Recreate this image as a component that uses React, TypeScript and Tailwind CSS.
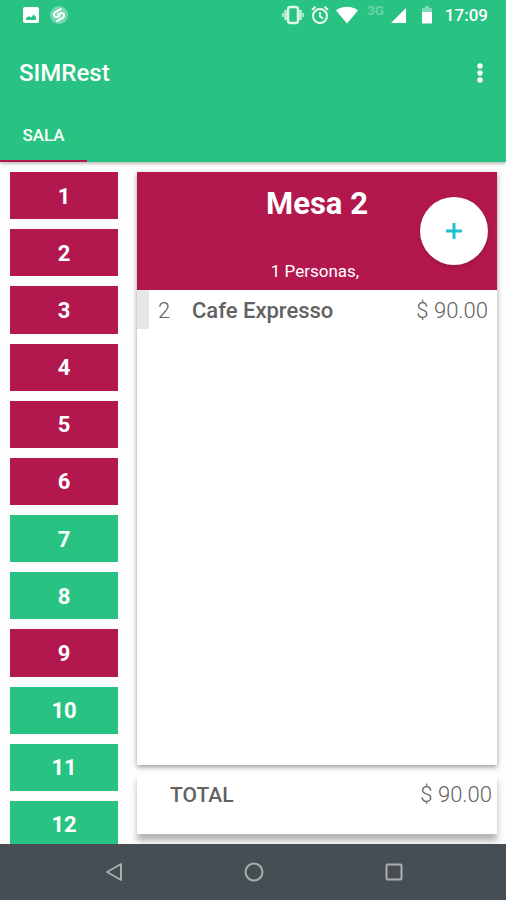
const tables = [
  { id: 1, busy: true },
  { id: 2, busy: true },
  { id: 3, busy: true },
  { id: 4, busy: true },
  { id: 5, busy: true },
  { id: 6, busy: true },
  { id: 7, busy: false },
  { id: 8, busy: false },
  { id: 9, busy: true },
  { id: 10, busy: false },
  { id: 11, busy: false },
  { id: 12, busy: false },
];

const orderItems = [{ quantity: 2, name: "Cafe Expresso", price: "$ 90.00" }];

function StatusBar() {
  return (
    <div className="flex h-[30px] items-center justify-between pr-[18px] pl-[22px]">
      <div className="flex items-center gap-[9px]">
        <svg width="18" height="18" viewBox="0 0 18 18" aria-label="Image">
          <path
            fill="#fff"
            fillRule="evenodd"
            d="M3 1h12a2 2 0 0 1 2 2v12a2 2 0 0 1-2 2H3a2 2 0 0 1-2-2V3a2 2 0 0 1 2-2zm1 13h10v-3l-2.500-2.500-2.500 3-2-1.500L4 12z"
          />
        </svg>
        <svg width="20" height="20" viewBox="0 0 20 20" fill="none" aria-label="Shazam">
          <circle cx="10" cy="10" r="9" fill="#fff" opacity="0.35" />
          <g stroke="#fff" strokeWidth="2" strokeLinecap="round">
            <path d="M12 4 6.500 7C4 8.500 4.500 11.500 7 12c1.500.2 2.500-.5 4-1.500" />
            <path d="m8 16 5.500-3c2.500-1.500 2-4.500-.5-5-1.500-.2-2.500.5-4 1.500" />
          </g>
        </svg>
      </div>

      <div className="flex items-center text-white">
        <svg width="22" height="20" viewBox="0 0 22 20" fill="none" stroke="#fff" aria-label="Vibrate">
          <rect x="6" y="2" width="10" height="16" rx="2.500" strokeWidth="2.500" opacity="0.85" />
          <path d="M3.500 5v10M18.500 5v10" strokeWidth="2.500" opacity="0.7" />
          <path d="M1 8v4M21 8v4" strokeWidth="2" opacity="0.6" />
        </svg>
        <svg
          className="ml-[7px]"
          width="18"
          height="20"
          viewBox="0 0 18 20"
          fill="none"
          stroke="#fff"
          strokeWidth="2"
          opacity="0.9"
          aria-label="Alarm"
        >
          <circle cx="9" cy="11" r="7" />
          <path d="M9 7v4.500l3 1.800M1 4.800l3.500-3M17 4.800l-3.500-3" />
        </svg>
        <svg className="ml-[7px]" width="22" height="20" viewBox="0 0 22 20" aria-label="Wi-Fi">
          <path fill="#fff" d="M0 5.500C6 .5 16 .5 22 5.500L11 18.500z" />
        </svg>
        <span className="mb-[8px] ml-[10px] text-[13px] leading-[12px] font-bold opacity-30">3G</span>
        <svg className="ml-[7px]" width="15" height="20" viewBox="0 0 15 20" aria-label="Signal">
          <path fill="#fff" d="M15 3v15H0z" />
        </svg>
        <svg className="ml-[15px]" width="12" height="20" viewBox="0 0 12 20" aria-label="Battery">
          <path fill="#fff" opacity="0.4" d="M1 3h3V1h4v2h3v4H1z" />
          <path fill="#fff" d="M1 7h10v11.500H1z" />
        </svg>
        <span className="ml-[12px] text-[17px] leading-[20px] font-medium">17:09</span>
      </div>
    </div>
  );
}

function Header() {
  return (
    <header className="relative z-10 bg-[#28c382] text-white shadow-[0_1px_4px_rgba(0,0,0,0.35)]">
      <StatusBar />
      <div className="flex h-[86px] items-center justify-between pr-[14px] pl-[19px]">
        <h1 className="text-[24px] leading-[28px] font-medium">SIMRest</h1>
        <button type="button" aria-label="Más opciones" className="flex h-8 w-6 items-center justify-center">
          <svg width="6" height="20" viewBox="0 0 6 20" fill="#fff">
            <circle cx="3" cy="3" r="2.700" />
            <circle cx="3" cy="10" r="2.700" />
            <circle cx="3" cy="17" r="2.700" />
          </svg>
        </button>
      </div>
      <nav className="flex h-[46px]">
        <button
          type="button"
          className="w-[87px] border-b-2 border-[#b2184e] pb-[6px] text-[17px] leading-[20px] font-medium"
        >
          SALA
        </button>
      </nav>
    </header>
  );
}

function TableList() {
  return (
    <nav className="w-[108px] shrink-0 overflow-y-auto [scrollbar-width:none]">
      <div className="grid h-[676px] auto-rows-fr gap-[10px]">
        {tables.map((table) => (
          <button
            key={table.id}
            type="button"
            className={`pt-[2px] text-[22px] leading-[26px] font-bold text-white ${
              table.busy ? "bg-[#b2184e]" : "bg-[#28c382]"
            }`}
          >
            {table.id}
          </button>
        ))}
      </div>
    </nav>
  );
}

function OrderCard() {
  return (
    <section className="flex flex-1 flex-col bg-white shadow-[0_2px_5px_rgba(0,0,0,0.4)]">
      <div className="relative flex h-[118px] flex-col items-center justify-between bg-[#b2184e] pt-[14px] pb-[9px] text-white">
        <h2 className="text-[31px] leading-[36px] font-bold">Mesa 2</h2>
        <p className="pr-1 text-[17px] leading-[20px]">1 Personas,</p>
        <button
          type="button"
          aria-label="Agregar"
          className="absolute top-[25px] right-[9px] flex size-[68px] items-center justify-center rounded-full bg-white shadow-[0_2px_4px_rgba(0,0,0,0.15)]"
        >
          <svg width="16" height="16" viewBox="0 0 16 16" stroke="#1fbfcf" strokeWidth="3">
            <path d="M8 0v16M0 8h16" />
          </svg>
        </button>
      </div>
      <ul>
        {orderItems.map((item) => (
          <li
            key={item.name}
            className="flex h-[39px] items-center border-l-12 border-[#e6e6e6] pt-[2px] pr-[9px] pl-[9px] text-[22px] leading-[26px] text-[#626262]"
          >
            <span className="w-[34px] font-light">{item.quantity}</span>
            <span className="flex-1 font-medium">{item.name}</span>
            <span className="font-light">{item.price}</span>
          </li>
        ))}
      </ul>
    </section>
  );
}

function TotalCard() {
  return (
    <section className="flex h-[60px] justify-between bg-white pt-[8px] pr-[5px] pl-[33px] text-[22px] leading-[26px] text-[#626262] shadow-[0_7px_6px_rgba(0,0,0,0.28)]">
      <span className="text-[21px] font-medium">TOTAL</span>
      <span className="font-light">$ 90.00</span>
    </section>
  );
}

function NavigationBar() {
  return (
    <footer className="relative z-10 flex h-[56px] items-center justify-center gap-[116px] bg-[#464e53] pl-[2px]">
      <button type="button" aria-label="Atrás">
        <svg width="24" height="24" viewBox="0 0 24 24" fill="none" stroke="#a9aeb0" strokeWidth="2">
          <path d="M19 4v16L5 12z" strokeLinejoin="round" />
        </svg>
      </button>
      <button type="button" aria-label="Inicio">
        <svg width="24" height="24" viewBox="0 0 24 24" fill="none" stroke="#a9aeb0" strokeWidth="2">
          <circle cx="12" cy="12" r="8.500" />
        </svg>
      </button>
      <button type="button" aria-label="Recientes">
        <svg width="24" height="24" viewBox="0 0 24 24" fill="none" stroke="#a9aeb0" strokeWidth="2">
          <rect x="4.500" y="4.500" width="15" height="15" rx="1" />
        </svg>
      </button>
    </footer>
  );
}

export default function App() {
  return (
    <div className="flex h-screen flex-col bg-[#fdfdfd] font-[Roboto,sans-serif]">
      <Header />
      <main className="flex min-h-0 flex-1 gap-[19px] pt-[10px] pr-[9px] pl-[10px]">
        <TableList />
        <div className="flex flex-1 flex-col gap-[9px] pb-[10px]">
          <OrderCard />
          <TotalCard />
        </div>
      </main>
      <NavigationBar />
    </div>
  );
}
